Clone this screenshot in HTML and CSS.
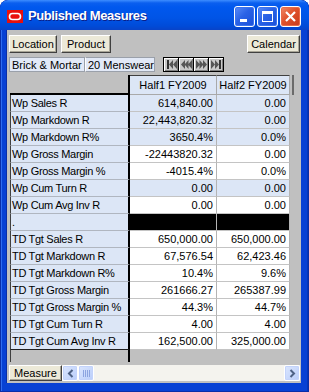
FILE: index.html
```html
<!DOCTYPE html>
<html lang="en">
<head>
<meta charset="UTF-8">
<title>Published Measures</title>
<link rel="stylesheet" href="styles.css">
</head>
<body>
<div class="window">
	<div class="titlebar">
		<span class="app-icon"><svg width="16" height="13" viewBox="0 0 16 13"><rect width="16" height="13" fill="#e8100c"/><rect x="2.5" y="3.5" width="11" height="6" rx="3" fill="none" stroke="#fff" stroke-width="1.6"/></svg></span>
		<span class="title">Published Measures</span>
		<span class="caption-btns">
			<span class="cbtn min"><i></i></span>
			<span class="cbtn max"><i></i></span>
			<span class="cbtn close"><svg width="13" height="13" viewBox="0 0 13 13"><path d="M2 2L11 11M11 2L2 11" stroke="#fff" stroke-width="2.2"/></svg></span>
		</span>
	</div>
	<div class="client">
		<div class="toolbar">
			<button class="btn loc">Location</button>
			<button class="btn prod">Product</button>
			<button class="btn cal">Calendar</button>
		</div>
		<div class="filters">
			<span class="field brick">Brick &amp; Mortar</span><span class="field mens">20 Menswear</span>
			<span class="nav">
				<span class="nbtn"><svg width="11" height="9" viewBox="0 0 11 9"><rect x="1" y="0" width="2" height="9" fill="#333"/><path d="M7 0L3 4.5L7 9ZM11 0L7 4.5L11 9Z" fill="#555"/></svg></span>
				<span class="nbtn"><svg width="11" height="9" viewBox="0 0 11 9"><path d="M4 0L0 4.5L4 9ZM7.5 0L3.5 4.5L7.5 9ZM11 0L7 4.5L11 9Z" fill="#555"/></svg></span>
				<span class="nbtn"><svg width="11" height="9" viewBox="0 0 11 9"><path d="M0 0L4 4.5L0 9ZM3.5 0L7.5 4.5L3.5 9ZM7 0L11 4.5L7 9Z" fill="#555"/></svg></span>
				<span class="nbtn"><svg width="11" height="9" viewBox="0 0 11 9"><path d="M0 0L4 4.5L0 9ZM4 0L8 4.5L4 9Z" fill="#555"/><rect x="8" y="0" width="2" height="9" fill="#333"/></svg></span>
			</span>
		</div>
		<div class="grid-wrap">
			<table class="grid">
				<thead>
					<tr><th class="corner"></th><th>Half1 FY2009</th><th>Half2 FY2009</th><th class="spacer"></th></tr>
				</thead>
				<tbody>
					<tr class="hl"><td class="lbl">Wp Sales R</td><td>614,840.00</td><td>0.00</td><td class="spacer"></td></tr>
					<tr class="hl"><td class="lbl">Wp Markdown R</td><td>22,443,820.32</td><td>0.00</td><td class="spacer"></td></tr>
					<tr class="hl"><td class="lbl">Wp Markdown R%</td><td>3650.4%</td><td>0.0%</td><td class="spacer"></td></tr>
					<tr><td class="lbl">Wp Gross Margin</td><td>-22443820.32</td><td>0.00</td><td class="spacer"></td></tr>
					<tr><td class="lbl">Wp Gross Margin %</td><td>-4015.4%</td><td>0.0%</td><td class="spacer"></td></tr>
					<tr class="hl"><td class="lbl">Wp Cum Turn R</td><td>0.00</td><td>0.00</td><td class="spacer"></td></tr>
					<tr><td class="lbl">Wp Cum Avg Inv R</td><td>0.00</td><td>0.00</td><td class="spacer"></td></tr>
					<tr class="sep"><td class="lbl">.</td><td></td><td></td><td class="spacer"></td></tr>
					<tr><td class="lbl">TD Tgt Sales R</td><td>650,000.00</td><td>650,000.00</td><td class="spacer"></td></tr>
					<tr><td class="lbl">TD Tgt Markdown R</td><td>67,576.54</td><td>62,423.46</td><td class="spacer"></td></tr>
					<tr><td class="lbl">TD Tgt Markdown R%</td><td>10.4%</td><td>9.6%</td><td class="spacer"></td></tr>
					<tr><td class="lbl">TD Tgt Gross Margin</td><td>261666.27</td><td>265387.99</td><td class="spacer"></td></tr>
					<tr><td class="lbl">TD Tgt Gross Margin %</td><td>44.3%</td><td>44.7%</td><td class="spacer"></td></tr>
					<tr><td class="lbl">TD Tgt Cum Turn R</td><td>4.00</td><td>4.00</td><td class="spacer"></td></tr>
					<tr class="last"><td class="lbl">TD Tgt Cum Avg Inv R</td><td>162,500.00</td><td>325,000.00</td><td class="spacer"></td></tr>
					<tr class="filler"><td class="lbl"></td><td></td><td></td><td class="spacer"></td></tr>
				</tbody>
			</table>
		</div>
		<div class="bottom">
			<button class="btn tab">Measure</button>
			<div class="hscroll">
				<span class="sbtn"><svg width="7" height="9" viewBox="0 0 7 9"><path d="M5.5 1L2 4.5L5.5 8" fill="none" stroke="#4d6185" stroke-width="2"/></svg></span>
				<span class="sbtn thumb"><i></i><i></i><i></i><i></i></span>
				<span class="track"></span>
				<span class="sbtn"><svg width="7" height="9" viewBox="0 0 7 9"><path d="M1.5 1L5 4.5L1.5 8" fill="none" stroke="#4d6185" stroke-width="2"/></svg></span>
			</div>
		</div>
	</div>
</div>
</body>
</html>
```

FILE: styles.css
```css
html, body, div, table, th, td, button { margin:0; padding:0; }
body { font:normal 11px "Liberation Sans", Arial, sans-serif; color:#000; background:#fff; }

.window { display:flex; flex-direction:column; width:309px; height:392px; box-sizing:border-box; background:#0841d4; border-radius:8px 8px 0 0; box-shadow:inset 0 0 0 1px #0a2ea8, inset 2px 0 #2f6cf0, inset -2px 0 #0636b8; overflow:hidden; }

/* title bar */
.titlebar { display:flex; align-items:center; height:30px; padding:0 8px 0 7px; box-sizing:border-box; background:linear-gradient(#3d8dff 0, #0a5fef 3px, #0058ee 7px, #0054e6 18px, #004bd8 26px, #0843c8 30px); border-radius:8px 8px 0 0; }
.app-icon { display:flex; width:16px; height:13px; margin-top:2px; }
.title { margin-left:5px; margin-top:1px; font:bold 13px "Liberation Sans", Arial, sans-serif; letter-spacing:-0.4px; color:#fff; text-shadow:1px 1px #0a1f8a; }
.caption-btns { display:flex; gap:2px; margin-left:auto; margin-top:2px; }
.cbtn { display:flex; align-items:center; justify-content:center; position:relative; width:21px; height:21px; box-sizing:border-box; border:1px solid #fff; border-radius:3px; background:linear-gradient(135deg, #5a8cf8 0, #2a62e6 45%, #1a4fd8 100%); box-shadow:inset 0 0 0 1px #3a72ee; }
.cbtn.close { background:linear-gradient(135deg, #f08a68 0, #e0522c 45%, #c83a1a 100%); box-shadow:inset 0 0 0 1px #e86a48; }
.cbtn.min i { position:absolute; left:5px; bottom:4px; width:7px; height:3px; background:#fff; }
.cbtn.max i { width:9px; height:7px; border:1px solid #fff; border-top-width:3px; }

/* client area */
.client { flex:1; display:flex; flex-direction:column; margin:0 8px 9px 7px; background:#c0c0c0; box-shadow:-1px 0 #0a2ea8; }

.btn { height:18px; box-sizing:border-box; padding:0; font:normal 11px "Liberation Sans", Arial, sans-serif; color:#000; background:#ece9d8; border:1px solid; border-color:#fff #404040 #404040 #fff; box-shadow:inset -1px -1px #a8a597; }
.toolbar { display:flex; margin-top:5px; padding:0 1px 0 2px; }
.btn.loc { width:48px; }
.btn.prod { width:50px; margin-left:4px; }
.btn.cal { width:53px; margin-left:auto; }

.filters { display:flex; align-items:center; height:16px; margin-top:3px; padding-left:2px; }
.field { height:15px; box-sizing:border-box; padding:0 0 0 2px; line-height:14px; white-space:nowrap; overflow:hidden; background:#e2e9f7; border:1px solid #9aa0aa; }
.field.brick { width:76px; }
.field.mens { width:70px; border-left:1px solid #fff; }
.nav { display:flex; margin-left:8px; margin-top:1px; }
.nbtn { display:flex; align-items:center; justify-content:center; width:16px; height:15px; box-sizing:border-box; background:#c8c8c8; border:1px solid #000; box-shadow:inset 1px 1px #fff, inset -1px -1px #808080; }
.nbtn + .nbtn { margin-left:-1px; }

/* grid */
.grid-wrap { margin:3px 0 0 3px; }
.grid { border-collapse:separate; border-spacing:0; table-layout:fixed; width:290px; }
.grid th, .grid td { padding:0; white-space:nowrap; overflow:hidden; font-weight:normal; }
.grid th { height:18px; line-height:18px; background:#dce6f6; border-top:1px solid #404040; border-bottom:1px solid #a9a9a9; border-right:1px solid #a9a9a9; text-align:center; }
.grid th.corner { width:118px; background:none; border-top:0; border-right:2px solid #000; border-bottom:2px solid #000; }
.grid th.corner + th { width:86px; }
.grid th.corner + th + th { width:72px; }
.grid th.spacer { width:10px; background:linear-gradient(to right, transparent 2px, #6b6b6b 2px, #6b6b6b 4px, transparent 4px); border:0; }
.grid td { height:16px; line-height:16px; padding-right:3px; text-align:right; background:#fff; border-bottom:1px solid #c4c4c4; border-right:1px solid #b4b4b4; }
.grid tr.hl td { background:#dce6f6; }
.grid td.lbl { padding:0 0 0 1px; text-align:left; letter-spacing:-0.3px; background:#dce6f6; border-left:1px solid #404040; border-right:2px solid #000; border-bottom-color:#b0b6c0; }
.grid tr.sep td { background:#000; }
.grid tr.sep td.lbl { background:#dce6f6; }
.grid td.spacer { padding:0; background:none; border:0; }
.grid tr.sep td.spacer, .grid tr.hl td.spacer { background:none; }
.grid tr.last td.lbl { border-bottom-color:#202020; }
.grid tr.filler td { height:12px; line-height:12px; background:none; border-bottom:0; border-right:0; }
.grid tr.filler td.lbl { border-right:2px solid #000; }

/* bottom bar */
.bottom { display:flex; height:16px; margin:auto 1px 2px 2px; }
.btn.tab { width:53px; height:16px; }
.hscroll { flex:1; display:flex; background:#f4f3ee; }
.sbtn { display:flex; align-items:center; justify-content:center; width:16px; height:16px; box-sizing:border-box; border:1px solid #fff; border-radius:2px; background:linear-gradient(135deg, #dbe6fe, #b9cdfa); box-shadow:inset 0 0 0 1px #c3d3fb; }
.sbtn.thumb { gap:1px; }
.sbtn.thumb i { width:1px; height:7px; background:#8ca4e0; }
.track { flex:1; }
```
